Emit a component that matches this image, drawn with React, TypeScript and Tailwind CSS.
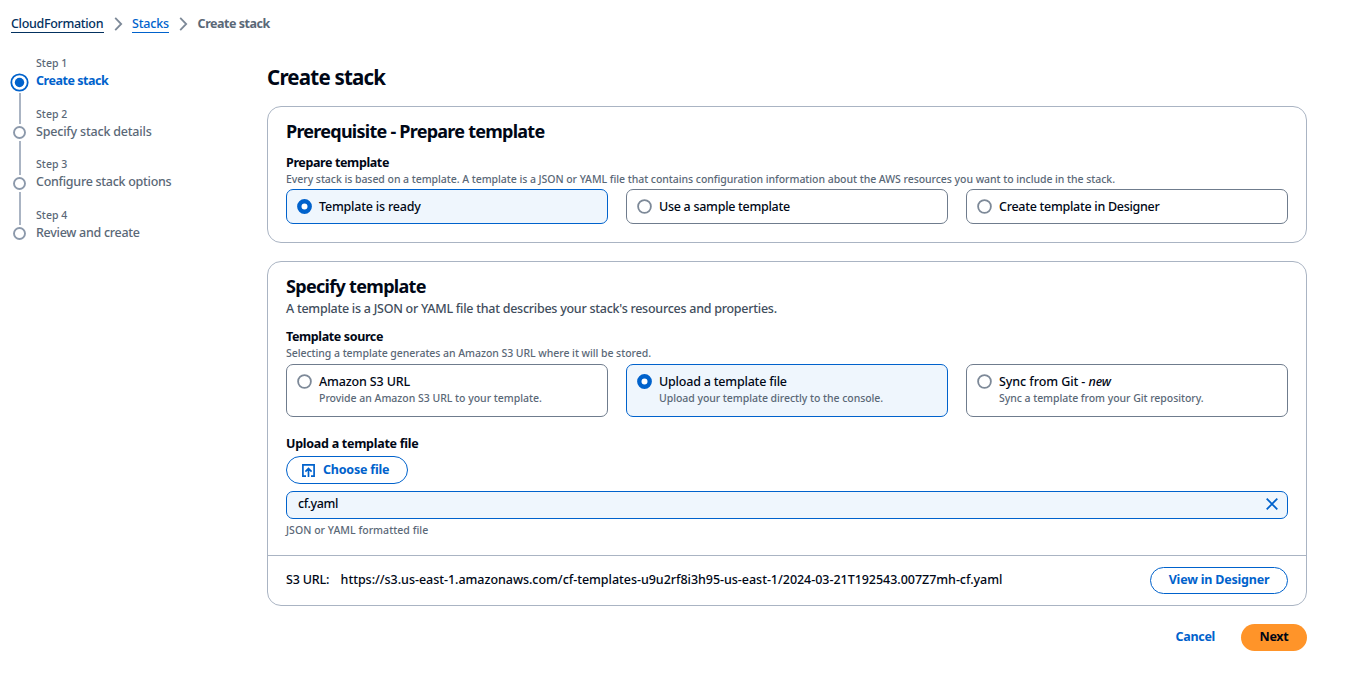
import type { ReactNode } from "react";

function Chevron() {
  return (
    <svg width="9" height="14" viewBox="0 0 9 14" className="shrink-0" fill="none" stroke="#7d8998" strokeWidth="1.8">
      <path d="M1.2 .8l6 6.2-6 6.2" />
    </svg>
  );
}

function StepMark({ active }: { active?: boolean }) {
  return active ? (
    <svg width="19" height="19" viewBox="0 0 19 19" className="shrink-0">
      <circle cx="9.5" cy="9.5" r="8.2" fill="#fff" stroke="#0062cc" strokeWidth="1.8" />
      <circle cx="9.5" cy="9.5" r="4.7" fill="#0062cc" />
    </svg>
  ) : (
    <svg width="13" height="13" viewBox="0 0 13 13" className="shrink-0">
      <circle cx="6.5" cy="6.5" r="5.5" fill="#fff" stroke="#8c99ab" strokeWidth="1.9" />
    </svg>
  );
}

function Radio({ checked }: { checked?: boolean }) {
  return (
    <svg width="15" height="15" viewBox="0 0 15 15" className="mt-[9px] shrink-0">
      {checked ? (
        <circle cx="7.5" cy="7.5" r="5.2" fill="#fff" stroke="#0062cc" strokeWidth="4.4" />
      ) : (
        <circle cx="7.5" cy="7.5" r="6.4" fill="#fff" stroke="#7d8998" strokeWidth="1.8" />
      )}
    </svg>
  );
}

function Tile({ checked, label, note }: { checked?: boolean; label: ReactNode; note?: ReactNode }) {
  return (
    <div
      className={
        checked
          ? "flex gap-[7px] rounded-[7px] border border-[#0062cc] bg-[#eff6fd] pl-[10px]"
          : "flex gap-[7px] rounded-[7px] border border-[#6f7c8d] pl-[10px]"
      }
    >
      <Radio checked={checked} />
      <div className="pt-[8px]">
        <div className="text-[12.5px] leading-[18px]">{label}</div>
        {note && <div className="text-[10.5px] leading-[15px] tracking-[-0.05px] text-[#5a6877]">{note}</div>}
      </div>
    </div>
  );
}

export default function App() {
  return (
    <div className="h-[692px] w-[1346px] overflow-hidden whitespace-nowrap bg-white font-['Noto_Sans',sans-serif] text-[12.5px] font-medium tracking-[-0.2px] text-[#000716]">
      <nav className="flex h-[47px] items-center pl-[11px]">
        <a className="h-[18px] w-[93px] border-b border-[#033160] leading-[17px] tracking-[-0.32px] text-[#033160]"><span>CloudFormation</span></a>
        <span className="flex w-[28px] justify-center"><Chevron /></span>
        <a className="h-[18px] w-[37px] border-b border-[#0062cc] leading-[17px] text-[#0062cc]"><span>Stacks</span></a>
        <span className="flex w-[28px] justify-center"><Chevron /></span>
        <span className="pl-[0.6px] font-bold leading-[18px] tracking-[-0.47px] text-[#5a6877]"><span>Create stack</span></span>
      </nav>

      <div className="flex">
        <aside className="flex w-[267px] pl-[10px]">
          <div className="flex w-[19px] flex-col items-center pt-[26px]">
            <StepMark active />
            <span className="mt-[1px] mb-[2px] h-[31px] w-[2px] bg-[#aab4c3]" />
            <StepMark />
            <span className="mt-[2px] mb-[2px] h-[34px] w-[2px] bg-[#aab4c3]" />
            <StepMark />
            <span className="mt-[2px] mb-[2px] h-[33px] w-[2px] bg-[#aab4c3]" />
            <StepMark />
          </div>
          <ol className="ml-[7px] pt-[8px] tracking-[-0.28px] text-[#5a6877]">
            <li className="h-[51px]">
              <div className="text-[10.5px] leading-[17px] tracking-[0.05px]"><span>Step 1</span></div>
              <div className="font-bold leading-[18px] tracking-[-0.47px] text-[#0062cc]"><span>Create stack</span></div>
            </li>
            <li className="h-[50px]">
              <div className="text-[10.5px] leading-[17px] tracking-[0.05px]"><span>Step 2</span></div>
              <div className="leading-[18px] tracking-[-0.2px]"><span>Specify stack details</span></div>
            </li>
            <li className="h-[51px]">
              <div className="text-[10.5px] leading-[17px] tracking-[0.05px]"><span>Step 3</span></div>
              <div className="leading-[18px]"><span>Configure stack options</span></div>
            </li>
            <li>
              <div className="text-[10.5px] leading-[17px] tracking-[0.05px]"><span>Step 4</span></div>
              <div className="leading-[18px]"><span>Review and create</span></div>
            </li>
          </ol>
        </aside>

        <main className="w-[1040px] pt-[16px]">
          <h1 className="h-[43px] text-[20.5px] font-bold leading-[28px] tracking-[-0.78px]"><span>Create stack</span></h1>

          <section className="h-[137px] rounded-[14px] border border-[#aab4c3] px-[18px] pt-[12px]">
            <h2 className="h-[35px] text-[18px] font-bold leading-[24px] tracking-[-0.75px]"><span>Prerequisite - Prepare template</span></h2>
            <div className="font-bold leading-[18px] tracking-[-0.38px]"><span>Prepare template</span></div>
            <div className="h-[17px] text-[10.5px] leading-[15px] tracking-[-0.05px] text-[#5a6877]">
              <span>Every stack is based on a template. A template is a JSON or YAML file that contains configuration information about the AWS resources you want to include in the stack.</span>
            </div>
            <div className="grid h-[35px] grid-cols-3 gap-[18px] tracking-[-0.28px]">
              <Tile checked label={<span className="tracking-[-0.2px]">Template is ready</span>} />
              <Tile label={<span>Use a sample template</span>} />
              <Tile label={<span>Create template in Designer</span>} />
            </div>
          </section>

          <section className="mt-[18px] h-[345px] rounded-[14px] border border-[#aab4c3]">
            <div className="h-[293px] px-[18px] pt-[12px]">
              <h2 className="h-[26px] text-[18px] font-bold leading-[24px] tracking-[-0.69px]"><span>Specify template</span></h2>
              <div className="h-[28px] leading-[18px] tracking-[-0.26px] text-[#414d5c]"><span>A template is a JSON or YAML file that describes your stack's resources and properties.</span></div>
              <div className="font-bold leading-[18px] tracking-[-0.38px]"><span>Template source</span></div>
              <div className="h-[18px] text-[10.5px] leading-[15px] tracking-[-0.05px] text-[#5a6877]"><span>Selecting a template generates an Amazon S3 URL where it will be stored.</span></div>
              <div className="grid h-[53px] grid-cols-3 gap-[18px]">
                <Tile label={<span className="tracking-[-0.15px]">Amazon S3 URL</span>} note={<span className="tracking-[-0.02px]">Provide an Amazon S3 URL to your template.</span>} />
                <Tile checked label={<span>Upload a template file</span>} note={<span>Upload your template directly to the console.</span>} />
                <Tile label={<span className="tracking-[-0.08px]">Sync from Git - <i>new</i></span>} note={<span>Sync a template from your Git repository.</span>} />
              </div>
              <div className="mt-[18px] h-[21px] font-bold leading-[18px] tracking-[-0.27px]"><span>Upload a template file</span></div>
              <button className="flex h-[28px] w-[122px] items-center rounded-full border border-[#0062cc] pl-[15px] font-bold text-[#0062cc]">
                <svg width="13" height="13" viewBox="0 0 13 13" fill="none" stroke="#0062cc" strokeWidth="1.7">
                  <path d="M4 12.1H.9V.9h11.2v11.2H9M6.5 13V4.5M3.4 7.6l3.1-3.1 3.1 3.1" />
                </svg>
                <span className="ml-[8px]">Choose file</span>
              </button>
              <div className="mt-[7px] flex h-[28px] items-center justify-between rounded-[7px] border border-[#0062cc] bg-[#eff6fd] pl-[11px] pr-[9px]">
                <span className="pb-[2px] leading-[18px] tracking-[-0.4px]">cf.yaml</span>
                <svg width="12" height="12" viewBox="0 0 12 12" fill="none" stroke="#0062cc" strokeWidth="1.8" className="mb-[2px]">
                  <path d="M.7.7l10.6 10.6M11.3.7L.7 11.3" />
                </svg>
              </div>
              <div className="mt-[3px] text-[10.5px] leading-[16px] tracking-[0.04px] text-[#5a6877]"><span>JSON or YAML formatted file</span></div>
            </div>
            <div className="flex h-[50px] items-center border-t border-[#aab4c3] px-[18px]">
              <span className="w-[54.6px]"><span>S3 URL:</span></span>
              <span className="tracking-[-0.035px]">https://s3.us-east-1.amazonaws.com/cf-templates-u9u2rf8i3h95-us-east-1/2024-03-21T192543.007Z7mh-cf.yaml</span>
              <button className="ml-auto h-[27px] w-[138px] rounded-full border border-[#0062cc] pb-[2px] font-bold leading-[23px] text-[#0062cc]"><span>View in Designer</span></button>
            </div>
          </section>

          <div className="mt-[18px] flex items-start justify-end gap-[26px] font-bold tracking-[-0.3px]">
            <button className="leading-[25px] text-[#0062cc]"><span>Cancel</span></button>
            <button className="h-[27px] w-[66px] rounded-full bg-[#ff9429] pb-[2px] leading-[24px]"><span>Next</span></button>
          </div>
        </main>
      </div>
    </div>
  );
}
